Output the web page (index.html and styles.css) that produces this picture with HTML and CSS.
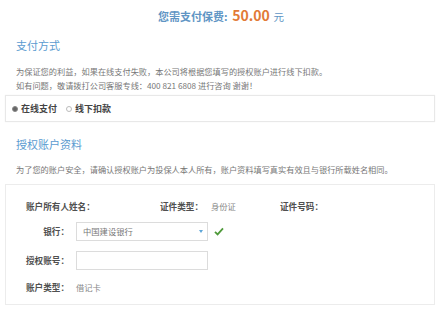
FILE: index.html
```html
<!DOCTYPE html>
<html>
<head>
  <meta charset="UTF-8">
  <meta name="viewport" content="width=device-width, initial-scale=1.0">
  <title>支付保费</title>
  <link rel="stylesheet" href="styles.css">
</head>
<body>
  <div class="header">
    <span class="fee-label">您需支付保费:</span>
    <span class="fee-num">50.00</span>
    <span class="fee-unit">元</span>
  </div>

  <h2 class="title">支付方式</h2>
  <div class="tips">
    <p>为保证您的利益，如果在线支付失败，本公司将根据您填写的授权账户进行线下扣款。</p>
    <p>如有问题，敬请拨打公司客服专线：400 821 6808 进行咨询 谢谢！</p>
  </div>

  <div class="pay-box">
    <label class="radio"><span class="dot checked"></span>在线支付</label>
    <label class="radio"><span class="dot"></span>线下扣款</label>
  </div>

  <h2 class="title title-2">授权账户资料</h2>
  <div class="tips tips-2">
    <p>为了您的账户安全，请确认授权账户为投保人本人所有，账户资料填写真实有效且与银行所载姓名相同。</p>
  </div>

  <div class="form-box">
    <div class="row row-first">
      <span class="col col-1 lbl">账户所有人姓名：</span>
      <span class="col col-2"><span class="lbl">证件类型：</span><span class="val">身份证</span></span>
      <span class="col lbl">证件号码：</span>
    </div>
    <div class="row row-bank">
      <span class="field-lbl">银行：</span>
      <div class="select">
        <span>中国建设银行</span>
        <span class="arrow"></span>
      </div>
      <svg class="check" width="10" height="9" viewBox="0 0 10 9">
        <path d="M1 4.8 L3.6 7.4 L9 1.4" fill="none" stroke="#4f9a3a" stroke-width="1.8"/>
      </svg>
    </div>
    <div class="row row-acc">
      <span class="field-lbl">授权账号：</span>
      <div class="input"></div>
    </div>
    <div class="row row-type">
      <span class="field-lbl">账户类型：</span>
      <span class="val val-type">借记卡</span>
    </div>
  </div>
</body>
</html>
```

FILE: styles.css
```css
* {
  padding: 0;
  margin: 0;
  box-sizing: border-box;
}
body {
  width: 440px;
  font-family: "Noto Sans CJK SC", "Noto Sans", sans-serif;
  background: #fff;
  color: #555;
}
.header {
  height: 28px;
  line-height: 28px;
  text-align: center;
  font-weight: bold;
  color: #5f95c4;
  padding-left: 2px;
}
.fee-label {
  font-size: 11px;
}
.fee-num {
  font-size: 14px;
  color: #e27a36;
  margin-left: 1px;
}
.fee-unit {
  font-size: 10.5px;
  font-weight: normal;
}
.title {
  margin: 6px 0 0 16px;
  font-size: 11px;
  line-height: 22px;
  font-weight: normal;
  color: #5b9bd0;
}
.title-2 {
  margin-top: 11px;
}
.tips {
  margin: 8px 0 0 16px;
  font-size: 8.2px;
  line-height: 14px;
  color: #777;
}
.tips-2 {
  margin-top: 7px;
}
.pay-box {
  display: flex;
  align-items: center;
  margin: 3px 5px 0;
  height: 27px;
  border: 1px solid #e8e8e8;
  padding-left: 4px;
  box-shadow: 0 0 1px #eee;
}
.radio {
  display: flex;
  align-items: center;
  font-size: 9px;
  font-weight: bold;
  color: #444;
  margin-right: 7px;
}
.dot {
  width: 6px;
  height: 6px;
  border-radius: 50%;
  border: 1px solid #bbb;
  margin: 0 3px 0 2px;
}
.dot.checked {
  background: #666;
  border-color: #888;
}
.form-box {
  margin: 8px 5px 0;
  height: 121px;
  border: 1px solid #ececec;
  padding: 11px 0 0 20px;
}
.row {
  display: flex;
  align-items: center;
  height: 20px;
  font-size: 8.6px;
}
.row-bank {
  margin-top: 5px;
}
.row-acc {
  margin-top: 9px;
}
.row-type {
  margin-top: 7px;
}
.col {
  display: flex;
  align-items: center;
}
.col-1 {
  width: 134px;
}
.col-2 {
  width: 120px;
}
.lbl,
.field-lbl {
  font-weight: bold;
  color: #505050;
}
.val {
  color: #888;
  margin-left: 8px;
  font-size: 8.3px;
}
.field-lbl {
  width: 43px;
  text-align: right;
  margin-right: 7px;
}
.val-type {
  margin-left: 0;
}
.select,
.input {
  width: 132px;
  height: 19px;
  border: 1px solid #dcdcdc;
}
.select {
  display: flex;
  align-items: center;
  justify-content: space-between;
  padding: 0 4px 0 6px;
  color: #777;
  font-size: 8.3px;
}
.arrow {
  width: 0;
  height: 0;
  border-left: 2.5px solid transparent;
  border-right: 2.5px solid transparent;
  border-top: 3px solid #5ea6d8;
}
.check {
  margin-left: 6px;
}
```
